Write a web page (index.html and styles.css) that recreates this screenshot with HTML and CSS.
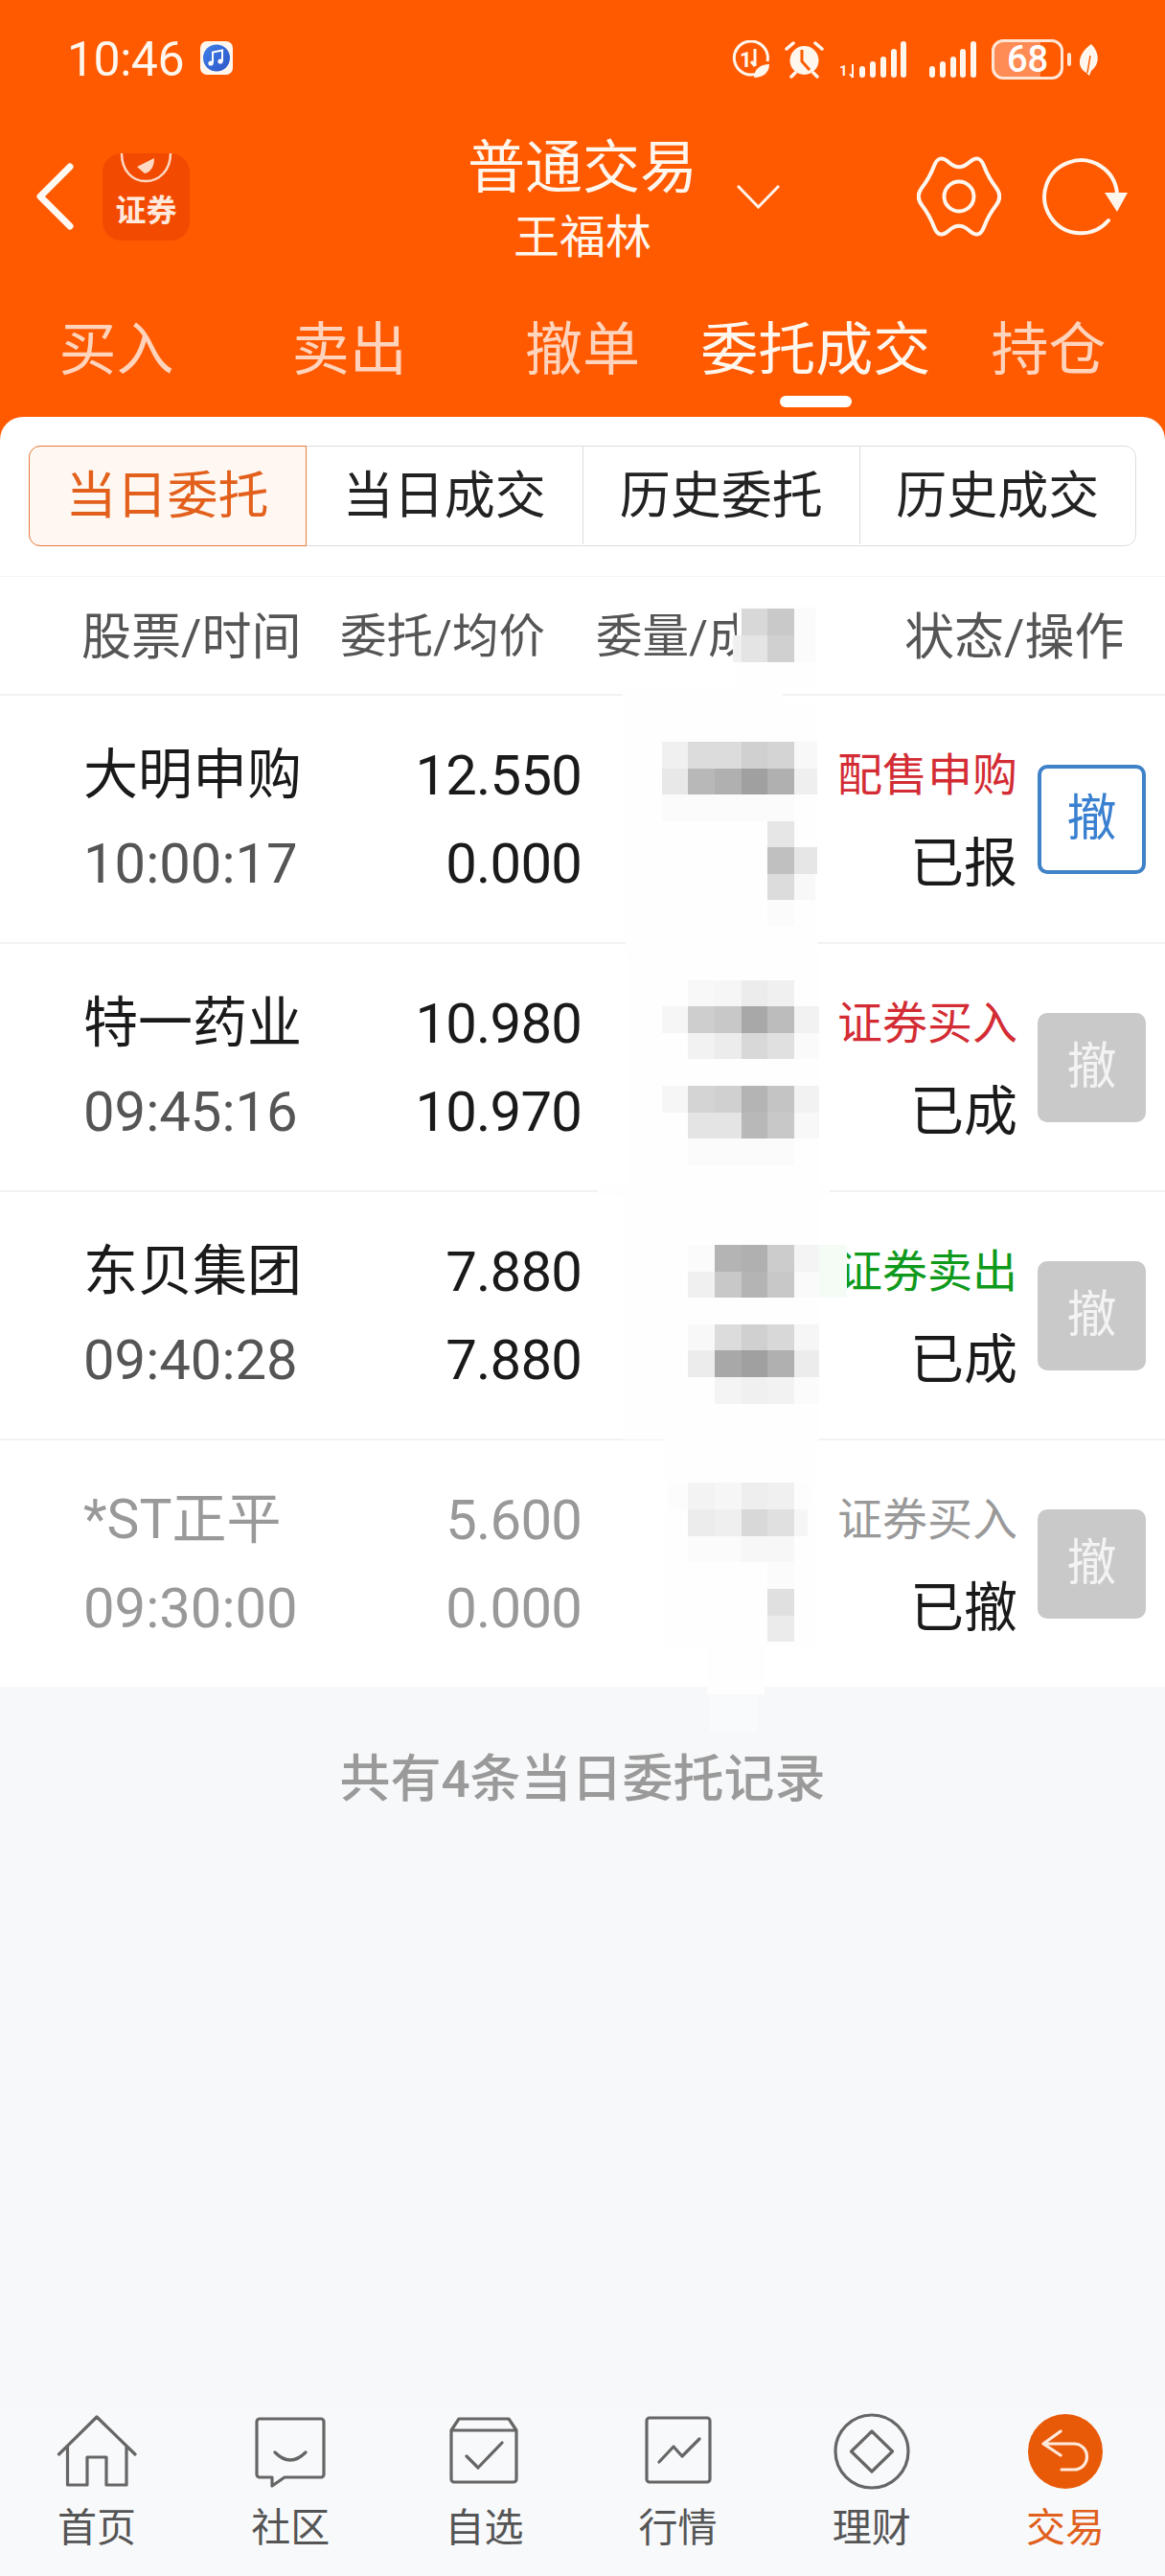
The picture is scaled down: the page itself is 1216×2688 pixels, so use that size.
FILE: index.html
```html
<!DOCTYPE html>
<html lang="zh-CN">
<head>
    <meta charset="UTF-8">
    <title>普通交易</title>
    <link rel="stylesheet" href="styles.css">
</head>
<body>
<div class="page">
    <div class="top">
        <div class="status">
            <span class="clock">10:46</span>
            <svg class="music" viewBox="0 0 34 35">
                <defs><linearGradient id="mg" x1="0" y1="0" x2="1" y2="1"><stop offset="0" stop-color="#3f7fe8"/><stop offset="1" stop-color="#2f57c8"/></linearGradient></defs>
                <rect width="34" height="35" rx="7" fill="#fff6ee"/>
                <circle cx="17" cy="17.5" r="14" fill="url(#mg)"/>
                <path d="M13 23V11.5L23 9.5V21" fill="none" stroke="#fff" stroke-width="2"/>
                <circle cx="11" cy="23" r="2.6" fill="#fff"/>
                <circle cx="21" cy="21" r="2.6" fill="#fff"/>
            </svg>
            <div class="status-right">
                <svg class="s-data" viewBox="0 0 40 40">
                    <path d="M28 34A17.5 17.5 0 1 1 37 22" fill="none" stroke="#fff6ee" stroke-width="3"/>
                    <text x="8" y="28" class="s-num">1</text>
                    <path d="M24 9V27M20 22L24 27" fill="none" stroke="#fff6ee" stroke-width="3"/>
                    <path d="M23 39C23 30 30 25 39 25C39 34 32 39 23 39Z" fill="#fff6ee"/>
                </svg>
                <svg class="s-alarm" viewBox="0 0 41 40">
                    <circle cx="20.5" cy="21" r="15" fill="#fff6ee"/>
                    <path d="M18 10V22L26 31" fill="none" stroke="#ff5a00" stroke-width="3"/>
                    <path d="M2 9L9 3M39 9L32 3M7 38L11 34M34 38L30 34" fill="none" stroke="#fff6ee" stroke-width="3.5" stroke-linecap="round"/>
                </svg>
                <svg class="s-sig1" viewBox="0 0 70 38">
                    <text x="0" y="36" class="s-small">1</text>
                    <path d="M14 24V38M11 34L14 38" fill="none" stroke="#fff6ee" stroke-width="2"/>
                    <g fill="#fff6ee">
                        <rect x="21" y="26" width="6" height="12" rx="3"/>
                        <rect x="32" y="21" width="6" height="17" rx="3"/>
                        <rect x="43" y="16" width="6" height="22" rx="3"/>
                        <rect x="54" y="8" width="6" height="30" rx="3"/>
                        <rect x="64" y="0" width="6" height="38" rx="3"/>
                    </g>
                </svg>
                <svg class="s-sig2" viewBox="0 0 49 38">
                    <g fill="#fff6ee">
                        <rect x="0" y="26" width="6" height="12" rx="3"/>
                        <rect x="11" y="21" width="6" height="17" rx="3"/>
                        <rect x="22" y="16" width="6" height="22" rx="3"/>
                        <rect x="32" y="8" width="6" height="30" rx="3"/>
                        <rect x="43" y="0" width="6" height="38" rx="3"/>
                    </g>
                </svg>
                <span class="batt">68</span>
                <span class="batt-knob"></span>
                <svg class="s-leaf" viewBox="0 0 22 33">
                    <path d="M14 0C22 8 24 20 14 28L12 33L9 30C-2 24 0 10 14 0Z" fill="#fff6ee"/>
                    <path d="M13 12L10 30" fill="none" stroke="#ff5a00" stroke-width="1.5"/>
                </svg>
            </div>
        </div>

        <div class="nav">
            <div class="nav-left">
                <svg class="back" viewBox="0 0 44 72">
                    <path d="M37 5L6 36L37 67" fill="none" stroke="#fff9f4" stroke-width="7" stroke-linecap="round" stroke-linejoin="round"/>
                </svg>
                <div class="logo">
                    <svg class="logo-mark" viewBox="0 0 91 36">
                        <path d="M20 0C20 18 31 29 45 29C59 29 71 18 71 0" fill="none" stroke="#ffd9c4" stroke-width="2.5"/>
                        <path d="M36 14L54 5C54 14 50 20 44 21Z" fill="#ffd9c4"/>
                    </svg>
                    <span class="logo-text">证券</span>
                </div>
            </div>
            <div class="title">
                <div class="title-main">普通交易</div>
                <div class="title-sub">王福林</div>
            </div>
            <div class="nav-right">
                <svg class="chevron" viewBox="0 0 45 25">
                    <path d="M1 1L22.5 23L44 1" fill="none" stroke="#fff3ea" stroke-width="3"/>
                </svg>
                <svg class="gear" viewBox="-44 -44 88 88">
                    <path d="M10.5 -35.5Q21 -45 26 -32Q31 -19 38.5 -9.5Q46 0 38.5 9.5Q31 19 26 32Q21 45 10.5 35.5Q0 26 -10.5 35.5Q-21 45 -26 32Q-31 19 -38.5 9.5Q-46 0 -38.5 -9.5Q-31 -19 -26 -32Q-21 -45 -10.5 -35.5Q0 -26 10.5 -35.5Z" fill="none" stroke="#fff6ee" stroke-width="4"/>
                    <circle r="15.5" fill="none" stroke="#fff6ee" stroke-width="4"/>
                </svg>
                <svg class="refresh" viewBox="0 0 94 88">
                    <path d="M71 69A38 38 0 1 1 80 41" fill="none" stroke="#fff6ee" stroke-width="4" stroke-linecap="round"/>
                    <path d="M67 40H91L80 60Z" fill="#fff6ee"/>
                </svg>
            </div>
        </div>

        <div class="tabs">
            <div class="tab">买入</div>
            <div class="tab">卖出</div>
            <div class="tab">撤单</div>
            <div class="tab on">委托成交<i class="tab-bar"></i></div>
            <div class="tab">持仓</div>
        </div>
    </div>

    <div class="card">
        <div class="seg">
            <div class="seg-item on">当日委托</div>
            <div class="seg-item">当日成交</div>
            <div class="seg-item">历史委托</div>
            <div class="seg-item">历史成交</div>
        </div>
        <div class="thead">
            <span class="th th-a">股票/时间</span>
            <span class="th th-b">委托/均价</span>
            <span class="th th-c">委量/成交</span>
            <span class="th">状态/操作</span>
        </div>

        <div class="row">
            <div class="c-name"><div class="l1">大明申购</div><div class="l2">10:00:17</div></div>
            <div class="c-price"><div>12.550</div><div>0.000</div></div>
            <div class="c-qty"></div>
            <div class="c-state"><div class="red">配售申购</div><div class="st">已报</div></div>
            <div class="btn live">撤</div>
        </div>
        <div class="row">
            <div class="c-name"><div class="l1">特一药业</div><div class="l2">09:45:16</div></div>
            <div class="c-price"><div>10.980</div><div>10.970</div></div>
            <div class="c-qty"></div>
            <div class="c-state"><div class="red">证券买入</div><div class="st">已成</div></div>
            <div class="btn">撤</div>
        </div>
        <div class="row">
            <div class="c-name"><div class="l1">东贝集团</div><div class="l2">09:40:28</div></div>
            <div class="c-price"><div>7.880</div><div>7.880</div></div>
            <div class="c-qty"></div>
            <div class="c-state"><div class="green">证券卖出</div><div class="st">已成</div></div>
            <div class="btn">撤</div>
        </div>
        <div class="row gone">
            <div class="c-name"><div class="l1">*ST正平</div><div class="l2">09:30:00</div></div>
            <div class="c-price"><div>5.600</div><div>0.000</div></div>
            <div class="c-qty"></div>
            <div class="c-state"><div class="grey">证券买入</div><div class="st">已撤</div></div>
            <div class="btn">撤</div>
        </div>
    </div>

    <div class="total">共有4条当日委托记录</div>

    <div class="bar">
        <div class="bar-item">
            <svg class="bar-icon" viewBox="0 0 84 84"><path d="M2.5 46L42 7L82 46M11.5 38V78H32V49H52V78H73V38"/></svg>
            <span>首页</span>
        </div>
        <div class="bar-item">
            <svg class="bar-icon" viewBox="0 0 84 84"><path d="M10 9H74A3 3 0 0 1 77 12V67A3 3 0 0 1 74 70H36L23 79V70H10A3 3 0 0 1 7 67V12A3 3 0 0 1 10 9ZM26 44Q42 60 58 44"/></svg>
            <span>社区</span>
        </div>
        <div class="bar-item">
            <svg class="bar-icon" viewBox="0 0 84 84"><path d="M8 21L16 9H68L76 21V72A3 3 0 0 1 73 75H11A3 3 0 0 1 8 72ZM8 21H76M24 48L36 60L61 34"/></svg>
            <span>自选</span>
        </div>
        <div class="bar-item">
            <svg class="bar-icon" viewBox="0 0 84 84"><path d="M12 8H72A3 3 0 0 1 75 11V72A3 3 0 0 1 72 75H12A3 3 0 0 1 9 72V11A3 3 0 0 1 12 8ZM22 54L37 38L46 48L64 30"/></svg>
            <span>行情</span>
        </div>
        <div class="bar-item">
            <svg class="bar-icon" viewBox="0 0 84 84"><circle cx="42" cy="43" r="38"/><path d="M42 22L63.5 43L42 64L20.5 43Z"/></svg>
            <span>理财</span>
        </div>
        <div class="bar-item on">
            <svg class="bar-icon" viewBox="0 0 84 84"><circle class="disc" cx="42" cy="43" r="39"/><path class="arrow" d="M37 22L19 35L37 47M19 35H51A13.5 13.5 0 0 1 51 62H38"/></svg>
            <span>交易</span>
        </div>
    </div>

    <!-- mosaic painted over the hidden quantity column -->
    <svg class="mosaic" viewBox="620 600 270 1230" shape-rendering="crispEdges">
        <g fill="#fefefe">
            <rect x="769" y="630" width="85" height="90"/>
            <rect x="650" y="720" width="167" height="12"/>
            <rect x="653" y="732" width="200" height="262"/>
            <rect x="624" y="1238" width="242" height="10"/>
            <rect x="655" y="994" width="200" height="250"/>
            <rect x="650" y="1248" width="205" height="254"/>
            <rect x="695" y="1495" width="158" height="225"/>
            <rect x="738" y="1720" width="60" height="48"/>
        </g>
        <rect x="740" y="1768" width="50" height="40" fill="#f9fafb"/>
        <rect x="855" y="1299" width="29" height="55" fill="#f5fbf5"/>

        <!-- header -->
        <rect x="765" y="663" width="9" height="28" fill="#f0f0f0"/>
        <rect x="774" y="635" width="27.5" height="28" fill="#d8d8d8"/>
        <rect x="801" y="635" width="28" height="28" fill="#c9c9c9"/>
        <rect x="774" y="663" width="27.5" height="28" fill="#e4e4e4"/>
        <rect x="801" y="663" width="28" height="28" fill="#d0d0d0"/>
        <rect x="829" y="635" width="22" height="56" fill="#fbfbfb"/>

        <!-- row 1 -->
        <g>
            <rect x="691" y="774" width="28" height="28" fill="#f0f0f0"/>
            <rect x="718" y="774" width="28" height="28" fill="#dcdcdc"/>
            <rect x="746" y="774" width="28" height="28" fill="#dcdcdc"/>
            <rect x="774" y="774" width="27" height="28" fill="#d0d0d0"/>
            <rect x="801" y="774" width="28" height="28" fill="#d4d4d4"/>
            <rect x="829" y="774" width="24" height="28" fill="#f8f8f8"/>
            <rect x="691" y="802" width="28" height="27" fill="#e8e8e8"/>
            <rect x="718" y="802" width="28" height="27" fill="#b8b8b8"/>
            <rect x="746" y="802" width="28" height="27" fill="#b0b0b0"/>
            <rect x="774" y="802" width="27" height="27" fill="#a0a0a0"/>
            <rect x="801" y="802" width="28" height="27" fill="#b0b0b0"/>
            <rect x="829" y="802" width="24" height="27" fill="#efefef"/>
            <rect x="691" y="829" width="138" height="28" fill="#fbfbfb"/>
            <rect x="801" y="857" width="28" height="27" fill="#e6e6e6"/>
            <rect x="801" y="884" width="28" height="28" fill="#c0c0c0"/>
            <rect x="829" y="884" width="24" height="28" fill="#e6e6e6"/>
            <rect x="801" y="912" width="28" height="27" fill="#dcdcdc"/>
            <rect x="829" y="912" width="22" height="27" fill="#f8f8f8"/>
            <rect x="801" y="939" width="28" height="27" fill="#fbfbfb"/>
        </g>

        <!-- row 2 -->
        <g>
            <rect x="718" y="1023" width="28" height="27" fill="#f8f8f8"/>
            <rect x="746" y="1023" width="28" height="27" fill="#f6f6f6"/>
            <rect x="774" y="1023" width="27" height="27" fill="#ececec"/>
            <rect x="801" y="1023" width="28" height="27" fill="#f0f0f0"/>
            <rect x="691" y="1050" width="28" height="28" fill="#f6f6f6"/>
            <rect x="718" y="1050" width="28" height="28" fill="#cecece"/>
            <rect x="746" y="1050" width="28" height="28" fill="#c8c8c8"/>
            <rect x="774" y="1050" width="27" height="28" fill="#a8a8a8"/>
            <rect x="801" y="1050" width="28" height="28" fill="#bcbcbc"/>
            <rect x="829" y="1050" width="26" height="28" fill="#f2f2f2"/>
            <rect x="718" y="1078" width="28" height="27" fill="#f2f2f2"/>
            <rect x="746" y="1078" width="28" height="27" fill="#ececec"/>
            <rect x="774" y="1078" width="27" height="27" fill="#d8d8d8"/>
            <rect x="801" y="1078" width="28" height="27" fill="#e0e0e0"/>
            <rect x="829" y="1078" width="26" height="27" fill="#fafafa"/>
            <rect x="691" y="1133" width="28" height="28" fill="#f6f6f6"/>
            <rect x="718" y="1133" width="28" height="28" fill="#d4d4d4"/>
            <rect x="746" y="1133" width="28" height="28" fill="#d0d0d0"/>
            <rect x="774" y="1133" width="27" height="28" fill="#b4b4b4"/>
            <rect x="801" y="1133" width="28" height="28" fill="#c4c4c4"/>
            <rect x="829" y="1133" width="26" height="28" fill="#f2f2f2"/>
            <rect x="718" y="1161" width="28" height="27" fill="#e4e4e4"/>
            <rect x="746" y="1161" width="28" height="27" fill="#e4e4e4"/>
            <rect x="774" y="1161" width="27" height="27" fill="#b8b8b8"/>
            <rect x="801" y="1161" width="28" height="27" fill="#c8c8c8"/>
            <rect x="829" y="1161" width="26" height="27" fill="#f8f8f8"/>
            <rect x="718" y="1188" width="111" height="28" fill="#fbfbfb"/>
        </g>

        <!-- row 3 -->
        <g>
            <rect x="718" y="1299" width="28" height="28" fill="#fbfbfb"/>
            <rect x="746" y="1299" width="28" height="28" fill="#b4b4b4"/>
            <rect x="774" y="1299" width="27" height="28" fill="#b0b0b0"/>
            <rect x="801" y="1299" width="28" height="28" fill="#cccccc"/>
            <rect x="829" y="1299" width="26" height="28" fill="#f4f4f4"/>
            <rect x="718" y="1327" width="28" height="27" fill="#f0f0f0"/>
            <rect x="746" y="1327" width="28" height="27" fill="#c8c8c8"/>
            <rect x="774" y="1327" width="27" height="27" fill="#b4b4b4"/>
            <rect x="801" y="1327" width="28" height="27" fill="#c8c8c8"/>
            <rect x="829" y="1327" width="26" height="27" fill="#fafafa"/>
            <rect x="718" y="1382" width="28" height="27" fill="#f8f8f8"/>
            <rect x="746" y="1382" width="28" height="27" fill="#dcdcdc"/>
            <rect x="774" y="1382" width="27" height="27" fill="#d0d0d0"/>
            <rect x="801" y="1382" width="28" height="27" fill="#d8d8d8"/>
            <rect x="829" y="1382" width="26" height="27" fill="#f6f6f6"/>
            <rect x="718" y="1409" width="28" height="28" fill="#ececec"/>
            <rect x="746" y="1409" width="28" height="28" fill="#a8a8a8"/>
            <rect x="774" y="1409" width="27" height="28" fill="#a0a0a0"/>
            <rect x="801" y="1409" width="28" height="28" fill="#b0b0b0"/>
            <rect x="829" y="1409" width="26" height="28" fill="#ececec"/>
            <rect x="746" y="1437" width="28" height="28" fill="#f4f4f4"/>
            <rect x="774" y="1437" width="27" height="28" fill="#f0f0f0"/>
            <rect x="801" y="1437" width="28" height="28" fill="#f2f2f2"/>
            <rect x="829" y="1437" width="26" height="28" fill="#fbfbfb"/>
        </g>

        <!-- row 4 -->
        <g>
            <rect x="698" y="1547" width="20" height="28" fill="#fcfcfc"/>
            <rect x="718" y="1547" width="28" height="28" fill="#f3f3f3"/>
            <rect x="746" y="1547" width="28" height="28" fill="#f6f6f6"/>
            <rect x="774" y="1547" width="27" height="28" fill="#eeeeee"/>
            <rect x="801" y="1547" width="28" height="28" fill="#f0f0f0"/>
            <rect x="829" y="1547" width="18" height="28" fill="#fdfdfd"/>
            <rect x="718" y="1575" width="28" height="28" fill="#ececec"/>
            <rect x="746" y="1575" width="28" height="28" fill="#efefef"/>
            <rect x="774" y="1575" width="27" height="28" fill="#d8d8d8"/>
            <rect x="801" y="1575" width="28" height="28" fill="#e0e0e0"/>
            <rect x="829" y="1575" width="14" height="28" fill="#f6f6f6"/>
            <rect x="718" y="1603" width="56" height="27" fill="#fbfbfb"/>
            <rect x="774" y="1603" width="55" height="27" fill="#f7f7f7"/>
            <rect x="801" y="1630" width="28" height="28" fill="#fbfbfb"/>
            <rect x="801" y="1658" width="28" height="28" fill="#e0e0e0"/>
            <rect x="801" y="1686" width="28" height="27" fill="#ebebeb"/>
        </g>
    </svg>
</div>
</body>
</html>
```

FILE: styles.css
```css
*{
    margin: 0;
    padding: 0;
    box-sizing: border-box;
}

body{
    font-family: Roboto, "Noto Sans CJK SC", sans-serif;
    background-color: #f7f8fa;
}

.page{
    width: 1216px;
    height: 2688px;
    position: relative;
    display: flex;
    flex-direction: column;
    overflow: hidden;
}

/* orange head */
.top{
    height: 460px;
    background-color: #ff5a00;
    color: #fff6ee;
}

.status{
    height: 124px;
    display: flex;
    align-items: center;
    padding: 0 69px 0 70px;
}

.clock{
    font-size: 50px;
    line-height: 44px;
    letter-spacing: -0.5px;
}

.music{
    width: 34px;
    height: 35px;
    margin: -3px 0 0 17px;
}

.status-right{
    margin-left: auto;
    display: flex;
    align-items: center;
}

.s-data{ width: 40px; height: 40px; }
.s-alarm{ width: 41px; height: 40px; margin-left: 15px; }
.s-sig1{ width: 70px; height: 38px; margin-left: 16px; overflow: visible; }
.s-sig2{ width: 49px; height: 38px; margin-left: 24px; }
.s-leaf{ width: 22px; height: 33px; margin-left: 7px; }

.s-num{
    font-size: 22px;
    font-weight: 700;
    fill: #fff6ee;
}

.s-small{
    font-size: 15px;
    font-weight: 700;
    fill: #fff6ee;
}

.batt{
    width: 75px;
    height: 42px;
    margin-left: 16px;
    border: 3px solid #ffe6d6;
    border-radius: 12px;
    background: linear-gradient(90deg, #ff8c55 70%, transparent 70%);
    font-size: 38px;
    font-weight: 500;
    line-height: 36px;
    text-align: center;
    color: #fff;
}

.batt-knob{
    width: 4px;
    height: 14px;
    margin-left: 4px;
    border-radius: 2px;
    background-color: #ffe6d6;
}

.nav{
    height: 166px;
    display: grid;
    grid-template-columns: 1fr 240px 1fr;
    align-items: center;
    padding-bottom: 4px;
}

.nav-left{
    display: flex;
    align-items: center;
    padding-left: 36px;
}

.back{
    width: 44px;
    height: 72px;
}

.logo{
    width: 91px;
    height: 91px;
    margin-left: 27px;
    border-radius: 20px;
    background-color: #f24a00;
    display: flex;
    flex-direction: column;
    align-items: center;
}

.logo-mark{
    width: 91px;
    height: 36px;
}

.logo-text{
    font-size: 32px;
    line-height: 42px;
    margin-top: 3px;
    font-weight: 700;
    color: #ffe9dc;
}

.title{
    padding-top: 3px;
    text-align: center;
    font-family: "Noto Sans CJK SC", sans-serif;
}

.title-main{
    font-size: 60px;
    line-height: 58px;
    white-space: nowrap;
}

.title-sub{
    font-size: 48px;
    line-height: 58px;
    margin-top: 15px;
}

.nav-right{
    display: flex;
    align-items: center;
    padding-right: 36px;
}

.chevron{
    width: 45px;
    height: 25px;
    margin-left: 41px;
}

.gear{
    width: 88px;
    height: 88px;
    margin-left: auto;
}

.refresh{
    width: 94px;
    height: 88px;
    margin-left: 41px;
}

.tabs{
    display: grid;
    grid-template-columns: repeat(5, 1fr);
}

.tab{
    text-align: center;
    font-size: 60px;
    line-height: 140px;
    height: 146px;
    color: #ffd3bc;
    font-family: "Noto Sans CJK SC", sans-serif;
    white-space: nowrap;
}

.tab.on{
    color: #fff6ee;
    padding-top: 20px;
    line-height: 100px;
    display: flex;
    flex-direction: column;
    align-items: center;
}

.tab-bar{
    display: block;
    width: 75px;
    height: 12px;
    border-radius: 6px;
    background-color: #fff;
    margin-top: 3px;
}

/* white sheet */
.card{
    margin-top: -25px;
    height: 1325px;
    padding-top: 30px;
    background-color: #fff;
    border-radius: 24px 24px 0 0;
}

.seg{
    height: 105px;
    margin: 0 30px;
    display: grid;
    grid-template-columns: repeat(4, 1fr);
    grid-template-rows: 102px;
    border: 1.5px solid #ddd;
    border-radius: 12px;
}

.seg-item{
    text-align: center;
    font-size: 53px;
    line-height: 104px;
    color: #222;
    border-left: 1.5px solid #ddd;
    white-space: nowrap;
}

.seg-item:first-child{
    border-left: 0;
}

.seg-item.on{
    height: 105px;
    margin: -1.5px 0 0 -1.5px;
    line-height: 105px;
    color: #e2601c;
    background-color: #fff7f2;
    border: 1.5px solid #e8793a;
    border-radius: 12px 0 0 12px;
}

.seg-item.on + .seg-item{
    border-left: 0;
}

.thead{
    height: 125px;
    margin-top: 31px;
    padding: 0 0 6px 85px;
    display: flex;
    align-items: center;
    border-top: 1px solid #f6f6f6;
    border-bottom: 2px solid #f2f2f2;
}

.th{
    font-size: 52px;
    color: #555;
    white-space: nowrap;
}

.th-a{ width: 270px; }
.th-b{ width: 267px; font-size: 48.5px; }
.th-c{ width: 322px; font-size: 48.5px; }

.row{
    height: 259px;
    display: flex;
    align-items: center;
    padding-right: 20px;
    border-bottom: 2px solid #f2f2f2;
    line-height: 92px;
}

.row:last-child{
    height: 257px;
    border-bottom: 0;
}

.c-name{
    width: 390px;
    padding-left: 87px;
    font-size: 57px;
    color: #1a1a1a;
    white-space: nowrap;
}

.c-name .l2{
    color: #555;
    font-size: 58px;
}

.c-price{
    width: 217px;
    font-size: 58px;
    letter-spacing: -0.8px;
    text-align: right;
    color: #1a1a1a;
}

.c-qty{
    flex: 1;
}

.c-state{
    width: 210px;
    text-align: right;
    font-size: 47px;
    white-space: nowrap;
}

.c-state .st{
    font-size: 56px;
    color: #1a1a1a;
}

.red{ color: #d32c34; }
.green{ color: #0f9a1c; }
.grey{ color: #999; }

.btn{
    width: 113px;
    height: 114px;
    margin-left: 21px;
    border-radius: 10px;
    background-color: #c9c9c9;
    color: #f3f3f3;
    font-size: 52px;
    line-height: 114px;
    text-align: center;
}

.btn.live{
    background-color: #fff;
    border: 4px solid #3f82c8;
    color: #3a80d0;
    line-height: 106px;
}

.gone .l1,
.gone .l2,
.gone .c-price{
    color: #999;
}

.total{
    margin-top: 62px;
    text-align: center;
    font-size: 53px;
    line-height: 70px;
    font-weight: 500;
    color: #9a9a9a;
}

/* bottom bar */
.bar{
    margin-top: auto;
    padding: 0 3px 26px 0;
    display: grid;
    grid-template-columns: repeat(6, 1fr);
    background-color: #f8f9fb;
}

.bar-item{
    display: flex;
    flex-direction: column;
    align-items: center;
    gap: 15px;
    font-size: 41px;
    line-height: 48px;
    color: #555;
}

.bar-item.on{
    color: #e0601c;
}

.bar-icon{
    width: 84px;
    height: 84px;
    fill: none;
    stroke: #666;
    stroke-width: 3.2;
    stroke-linejoin: round;
    stroke-linecap: round;
}

.bar-icon .disc{
    fill: #e85a08;
    stroke: none;
}

.bar-icon .arrow{
    stroke: #ffe9dc;
}

.mosaic{
    position: absolute;
    left: 620px;
    top: 600px;
    width: 270px;
    height: 1230px;
}
```
